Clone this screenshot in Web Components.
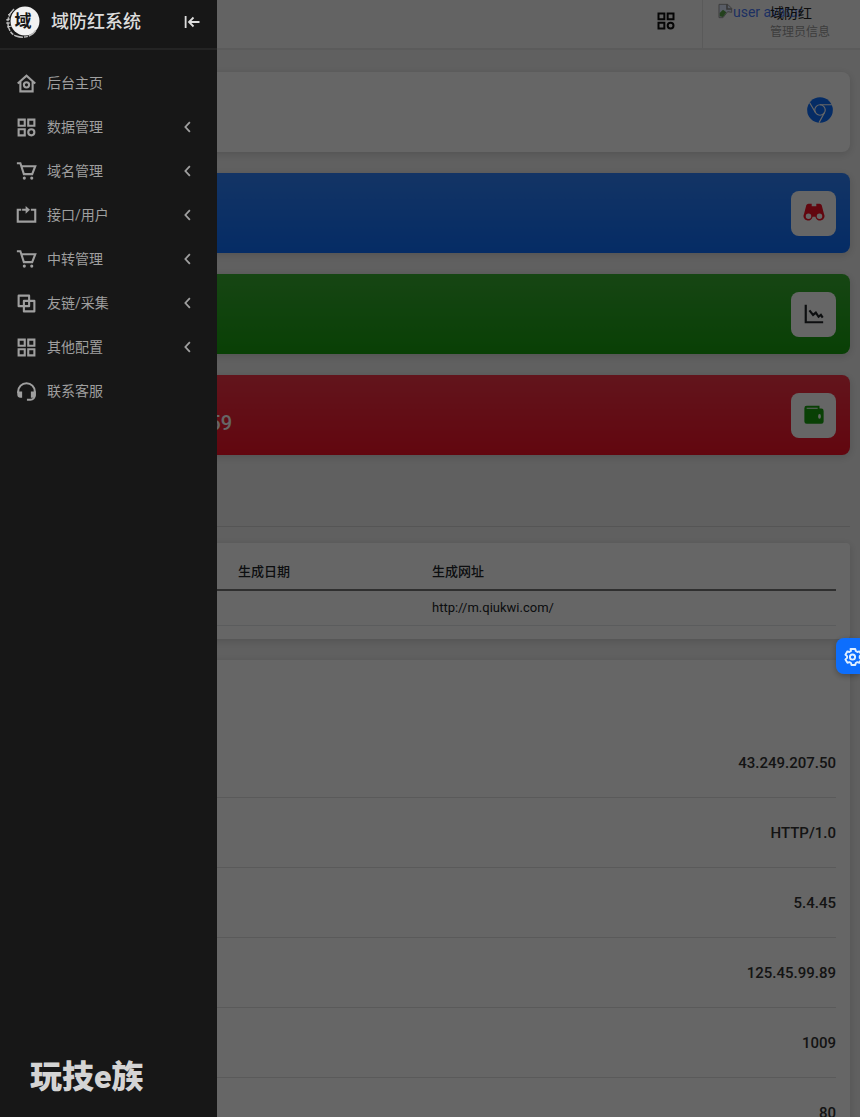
<!DOCTYPE html>
<html lang="zh-CN">
<head>
<meta charset="utf-8">
<meta name="viewport" content="width=device-width, initial-scale=1">
<title>域防红系统</title>
<style>
  body {
    margin: 0;
    height: 100vh;
    overflow: hidden;
    background: #f0f0f0;
    color: #212529;
    font: 14px/20px Roboto, "Noto Sans CJK SC", sans-serif;
  }
</style>
</head>
<body>
<admin-shell>
  <top-bar slot="page"></top-bar>
  <main-board slot="page"></main-board>
  <side-drawer slot="drawer"></side-drawer>
  <settings-tab slot="drawer"></settings-tab>
</admin-shell>

<script>
const ICONS = {
  home: '<path d="M2 12 12 3l10 9M5 10v11h14V10"/><circle cx="12" cy="13.500" r="3"/>',
  category: '<path d="M3 3h7v7H3zM14 3h7v7h-7zM3 14h7v7H3z"/><circle cx="17.500" cy="17.500" r="3.500"/>',
  grid: '<path d="M3 3h7v7H3zM14 3h7v7h-7zM3 14h7v7H3zM14 14h7v7h-7z"/>',
  cart: '<path d="M1 2.500h4l4 12.500h9.500l3.500-9H6"/><circle cx="9.500" cy="19.500" r="1.800" fill="currentColor" stroke="none"/><circle cx="18" cy="19.500" r="1.800" fill="currentColor" stroke="none"/>',
  repost: '<path d="M6 5.500H2V19h20V5.500h-5M7 5.500h5"/><path d="M11 1 16 5.500 11 10z" fill="currentColor" stroke="none"/>',
  copy: '<path d="M3 3h12v12H3zM9 9h12v12H9z" stroke-linejoin="round"/>',
  headset: '<path d="M2.500 14v-2a9.500 9.500 0 0 1 19 0v4c0 3-2 5.500-5 5.500h-4"/><path d="M1.500 12H7v7H5a3.500 3.500 0 0 1-3.500-3zM17 12h5.500v4a3.500 3.500 0 0 1-3.500 3h-2z" fill="currentColor" stroke="none"/>',
  chevron: '<path d="M14.500 5.500 8.500 12l6 6.500"/>',
  collapse: '<path d="M3.500 4v16M22 12H9M14 6l-6 6 6 6"/>',
  gear: '<path d="m9.500 2.500.6 2.600-2 1.200-2.500-.8-2.500 4.200 2 1.800v2.300l-2 1.900 2.500 4.200 2.600-.8 1.900 1.100.6 2.500h4.800l.6-2.500 2-1.100 2.500.8 2.500-4.200-2-1.900v-2.300l2-1.800-2.500-4.200-2.500.8-2-1.200-.6-2.600z" stroke-linejoin="round"/><circle cx="12" cy="12.700" r="3.300"/>',
  chrome: '<circle cx="12" cy="12" r="11" fill="currentColor" stroke="none"/><g stroke="#fff" stroke-width="1"><circle cx="12" cy="12" r="4.500"/><path d="M12 7.500h10.200M8.100 14.200 3 5.600M15.900 14.200l-4.700 8.600"/></g>',
  binoculars: '<path fill="currentColor" stroke="none" fill-rule="evenodd" d="M6 2h3.500v2.500h5V2H18c1.500 0 2.300 1 2.700 2.500l2.200 8.500a5 5 0 1 1-9.400 3h-3a5 5 0 1 1-9.400-3l2.200-8.500C3.700 3 4.500 2 6 2zm0 10.500a3 3 0 1 0 0 6 3 3 0 0 0 0-6zm12 0a3 3 0 1 0 0 6 3 3 0 0 0 0-6z"/>',
  chart: '<path d="M3 2v19h19M7 8l4 5 3-2.500 3 4.500 2.500-2 2 3"/>',
  wallet: '<path fill="currentColor" stroke="none" fill-rule="evenodd" d="M4 2h14v3h2a2.500 2.500 0 0 1 2.500 2.500V19a2.500 2.500 0 0 1-2.500 2.500H4A2.500 2.500 0 0 1 1.500 19V4.500A2.500 2.500 0 0 1 4 2zm0 2v1.200h12V4zm14 7a1.500 2.500 0 1 0 0 5 1.500 2.500 0 0 0 0-5z"/>',
  broken: '<path d="M3 2h13l6 6v6l-6-1-4 5-3 4H3z" fill="#dfe8ff" stroke="#999" stroke-width="1.500"/><path d="M4 20v-5l5-5 5 4-5 7z" fill="#5aa34a" stroke="none"/><path d="M15 2v7h7" stroke="#888"/>'
};

function define(name, markup) {
  const template = document.createElement('template');
  customElements.define(name, class extends HTMLElement {
    connectedCallback() {
      if (this.shadowRoot) return;
      template.innerHTML = typeof markup === 'function' ? markup(this) : markup;
      this.attachShadow({ mode: 'open' }).append(template.content.cloneNode(true));
    }
  });
}

define('ui-icon', el => `
  <style>
    :host { display: block; flex: none; width: var(--icon-size, 18px); height: var(--icon-size, 18px); }
    svg { display: block; width: 100%; height: 100%; }
  </style>
  <svg viewBox="0 0 24 24" fill="none" stroke="currentColor" stroke-width="2.400" aria-hidden="true">${ICONS[el.getAttribute('name')]}</svg>`);

define('admin-shell', `
  <style>
    :host { display: block; min-height: 100vh; }
    .backdrop { position: fixed; inset: 0; background: rgba(0, 0, 0, .6); }
  </style>
  <slot name="page"></slot>
  <div class="backdrop"></div>
  <slot name="drawer"></slot>`);

define('top-bar', `
  <style>
    :host { display: flex; justify-content: flex-end; box-sizing: border-box; height: 50px; background: #f8f8f8; border-bottom: 2px solid #e4e4e4; }
    button { padding: 0 26px 6px; border: 0; background: none; color: #111; --icon-size: 20px; }
    .user { display: flex; box-sizing: border-box; width: 158px; padding: 2px 0 0 14px; border-left: 1px solid #e0e0e0; }
    a { display: flex; width: 53px; white-space: nowrap; color: #4a78f5; text-decoration: none; --icon-size: 16px; }
    a ui-icon { margin-top: 1px; }
    .name, .role { margin: 0; }
    .name { line-height: 22px; color: #222; }
    .role { font-size: 12px; line-height: 16px; color: #999; }
  </style>
  <button type="button" aria-label="应用"><ui-icon name="category"></ui-icon></button>
  <div class="user">
    <a href="#profile"><ui-icon name="broken"></ui-icon>user avatar</a>
    <div><p class="name">域防红</p><p class="role">管理员信息</p></div>
  </div>`);

define('stat-card', `
  <style>
    :host { display: flex; align-items: center; box-sizing: border-box; height: 80px; padding: 0 14px; border-radius: 8px; background: var(--card, #fff); box-shadow: 0 2px 8px rgba(0, 0, 0, .15); }
    :host([tone]) { background: linear-gradient(180deg, rgba(255, 255, 255, .15), rgba(255, 255, 255, 0)) var(--card); }
    :host([tone="blue"]) { --card: #0d6efd; }
    :host([tone="green"]) { --card: #17a00e; }
    :host([tone="red"]) { --card: #f41127; }
    .value { box-sizing: border-box; width: 208px; padding-top: 16px; text-align: right; font-size: 20px; line-height: 24px; font-weight: 500; color: #fff; }
    .badge { display: grid; place-items: center; margin-left: auto; width: 45px; height: 45px; border-radius: 8px; --icon-size: 22px; }
    :host([tone]) .badge { background: #fff; }
    :host(:not([tone])) .badge { width: 32px; padding-bottom: 4px; --icon-size: 28px; }
  </style>
  <div class="value"><slot></slot></div>
  <div class="badge"><slot name="icon"></slot></div>`);

define('panel-card', `
  <style>
    :host { display: block; padding: 0 14px; border-radius: 4px; background: #fff; box-shadow: 0 2px 8px rgba(0, 0, 0, .15); }
  </style>
  <slot></slot>`);

define('link-table', `
  <style>
    :host { display: block; padding: 12px 0 13px; }
    table { width: 100%; border-collapse: collapse; table-layout: fixed; font-size: 13px; line-height: 18px; }
    th, td { padding: 8px; text-align: left; }
    th { font-weight: 500; border-bottom: 2px solid #777; }
    td { border-bottom: 1px solid #e4e6e8; }
    .id { width: 190px; }
    .date { width: 178px; }
  </style>
  <table>
    <thead><tr><th class="id"></th><th class="date">生成日期</th><th>生成网址</th></tr></thead>
    <tbody><tr><td></td><td></td><td>http://m.qiukwi.com/</td></tr></tbody>
  </table>`);

define('info-row', `
  <style>
    :host { display: flex; align-items: center; justify-content: flex-end; box-sizing: border-box; height: 70px; border-bottom: 1px solid #e0e0e0; font-size: 15px; font-weight: 500; color: #333; }
  </style>
  <slot></slot>`);

define('main-board', `
  <style>
    :host { display: block; padding: 22px 10px; }
    .stats { display: grid; gap: 21px; }
    hr { margin: 71px 0 16px; border: 0; border-top: 1px solid #d4d4d4; }
    .server { margin-top: 21px; padding-top: 68px; }
    .blue { color: #0d6efd; }
    .red { color: #f41127; }
    .green { color: #17a00e; }
  </style>
  <section class="stats">
    <stat-card><ui-icon class="blue" slot="icon" name="chrome"></ui-icon></stat-card>
    <stat-card tone="blue"><ui-icon class="red" slot="icon" name="binoculars"></ui-icon></stat-card>
    <stat-card tone="green"><ui-icon slot="icon" name="chart"></ui-icon></stat-card>
    <stat-card tone="red">59<ui-icon class="green" slot="icon" name="wallet"></ui-icon></stat-card>
  </section>
  <hr>
  <panel-card><link-table></link-table></panel-card>
  <panel-card class="server">
    <info-row>43.249.207.50</info-row>
    <info-row>HTTP/1.0</info-row>
    <info-row>5.4.45</info-row>
    <info-row>125.45.99.89</info-row>
    <info-row>1009</info-row>
    <info-row>80</info-row>
  </panel-card>`);

define('nav-item', el => `
  <style>
    :host { display: block; }
    a { display: flex; align-items: center; height: 44px; padding: 0 20px 0 16px; color: #9f9f9f; text-decoration: none; --icon-size: 21px; }
    span { flex: 1; padding-left: 10px; }
    .arrow { --icon-size: 18px; }
  </style>
  <a href="#">
    <ui-icon name="${el.getAttribute('icon')}"></ui-icon>
    <span><slot></slot></span>
    ${el.hasAttribute('more') ? '<ui-icon class="arrow" name="chevron"></ui-icon>' : ''}
  </a>`);

define('brand-logo', `
  <style>
    :host { display: block; width: 34px; height: 34px; }
    svg { display: block; }
    text { font: 700 17px "Noto Sans CJK SC", sans-serif; }
  </style>
  <svg width="34" height="34" viewBox="0 0 34 34" role="img">
    <circle cx="19" cy="16" r="14.500" fill="#f2f2f2"/>
    <path d="M8 4C-1 12 0 27 10 31c8 3 17 0 20-6" fill="none" stroke="#bbb" stroke-width="1.500" stroke-dasharray="9 1 4 1"/>
    <path d="M2 10l4-3M0 15l4-1M0 18h4M1 22l5-1" stroke="#ccc"/>
    <text x="17" y="22" text-anchor="middle" fill="#181818">域</text>
  </svg>`);

define('side-drawer', `
  <style>
    :host { position: fixed; inset: 0 auto 0 0; display: flex; flex-direction: column; box-sizing: border-box; width: 217px; background: #171717; }
    header { display: flex; align-items: center; box-sizing: border-box; height: 50px; padding: 0 16px 4px 6px; border-bottom: 2px solid #242424; color: #ddd; }
    h1 { flex: 1; margin: 0 0 0 11px; font-size: 18px; line-height: 24px; font-weight: 500; }
    button { padding: 0; border: 0; background: none; color: inherit; --icon-size: 18px; }
    nav { padding-top: 11px; }
    .mark { margin: auto 0 22px 30px; font-size: 32px; line-height: 36px; font-weight: 900; color: #d4d4d4; }
  </style>
  <header>
    <brand-logo></brand-logo>
    <h1>域防红系统</h1>
    <button type="button" aria-label="收起菜单"><ui-icon name="collapse"></ui-icon></button>
  </header>
  <nav>
    <nav-item icon="home">后台主页</nav-item>
    <nav-item icon="category" more>数据管理</nav-item>
    <nav-item icon="cart" more>域名管理</nav-item>
    <nav-item icon="repost" more>接口/用户</nav-item>
    <nav-item icon="cart" more>中转管理</nav-item>
    <nav-item icon="copy" more>友链/采集</nav-item>
    <nav-item icon="grid" more>其他配置</nav-item>
    <nav-item icon="headset">联系客服</nav-item>
  </nav>
  <div class="mark">玩技e族</div>`);

define('settings-tab', `
  <style>
    :host { position: fixed; right: 0; top: 638px; width: 24px; height: 36px; overflow: hidden; border-radius: 8px 0 0 8px; box-shadow: 0 2px 6px rgba(0, 0, 0, .3); }
    button { display: flex; align-items: center; width: 40px; height: 36px; padding: 0 0 0 7px; border: 0; background: #0d6efd; color: #e0efff; --icon-size: 19px; }
  </style>
  <button type="button" aria-label="设置"><ui-icon name="gear"></ui-icon></button>`);
</script>
</body>
</html>
